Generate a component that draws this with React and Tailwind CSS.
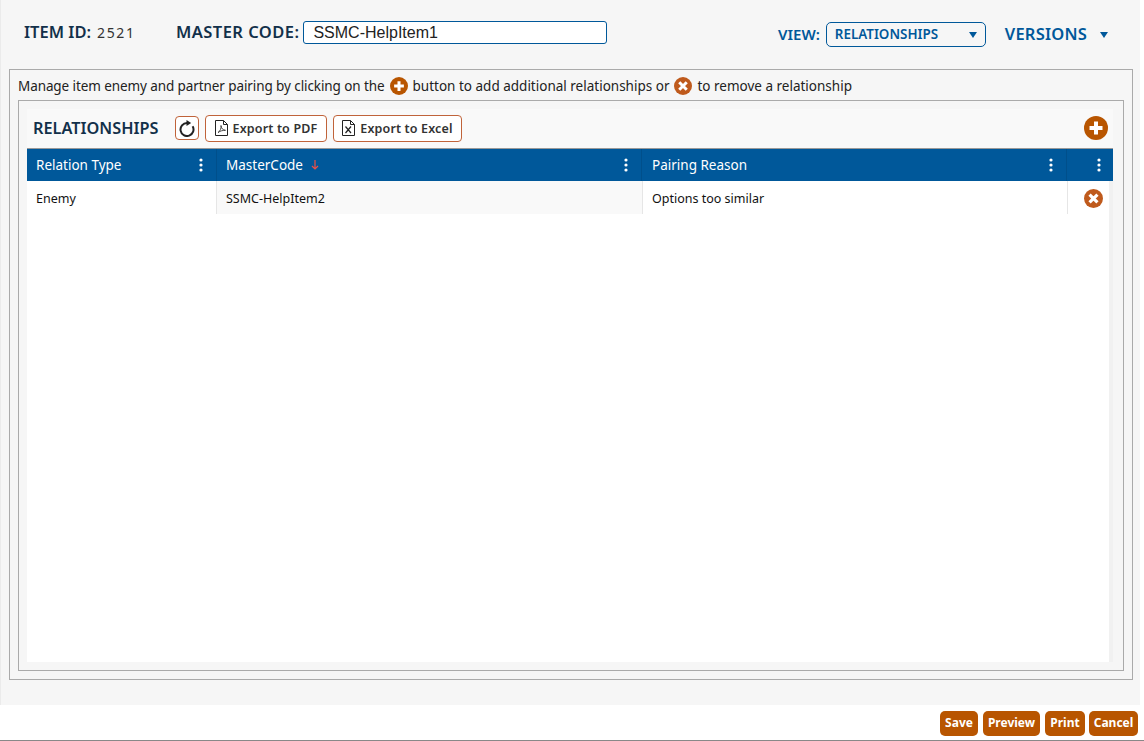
function PlusIcon({ size = 24 }) {
  return (
    <svg width={size} height={size} viewBox="0 0 24 24" className="shrink-0">
      <circle cx="12" cy="12" r="12" fill="#b85500" />
      <path d="M12 5.5v13M5.5 12h13" stroke="#fff" strokeWidth="4" />
    </svg>
  )
}

function CloseIcon({ size = 19 }) {
  return (
    <svg width={size} height={size} viewBox="0 0 24 24" className="shrink-0">
      <circle cx="12" cy="12" r="12" fill="#bf5a1c" />
      <path d="M7 7l10 10M17 7L7 17" stroke="#fff" strokeWidth="4" />
    </svg>
  )
}

function Dots() {
  return (
    <svg width="4" height="14" viewBox="0 0 4 14" className="shrink-0">
      <circle cx="2" cy="2" r="1.6" fill="#fff" />
      <circle cx="2" cy="7" r="1.6" fill="#fff" />
      <circle cx="2" cy="12" r="1.6" fill="#fff" />
    </svg>
  )
}

function Caret({ className }) {
  return (
    <svg width="8" height="6" viewBox="0 0 8 6" className={className}>
      <path d="M0 0h8L4 6z" fill="#00589a" />
    </svg>
  )
}

// page outline with a folded corner, the mark inside differs per export type
function DocIcon({ children }) {
  return (
    <svg width="13" height="16" viewBox="0 0 13 16" fill="none" stroke="#222" strokeWidth="1" className="shrink-0">
      <path d="M0.5 0.5h8l4 4v11h-12z" />
      <path d="M8.5 0.5v4h4" />
      {children}
    </svg>
  )
}

function HeaderCell({ className, children }) {
  return (
    <div className={`flex items-center justify-between border-r border-[#004f8b] ${className}`}>
      <span className="flex items-center gap-2">{children}</span>
      <Dots />
    </div>
  )
}

function ActionButton({ children, className }) {
  return (
    <button className={`h-[27px] flex items-center justify-center rounded border border-[#c0633a] bg-white text-[12.5px] font-semibold text-[#333] tracking-[0.15px] ${className}`}>
      {children}
    </button>
  )
}

function FooterButton({ children, className }) {
  return (
    <button className={`h-[25px] rounded-[5px] bg-[#b85500] text-white text-[12px] font-bold ${className}`}>
      {children}
    </button>
  )
}

export default function App() {
  return (
    <div className="h-[741px] flex flex-col bg-white font-['Noto_Sans',sans-serif] overflow-hidden">
      <div className="h-[705px] w-[1140px] bg-[#f6f6f6] border-l border-[#ebebeb] flex flex-col">
        <div className="h-[69px] flex items-start pl-[23px] pr-[32px] pt-[21px]">
          <div className="h-[23px] flex items-center text-[16.5px] font-semibold text-[#12304a] w-[152px]">
            ITEM ID:
            <span className="ml-[6px] font-normal text-[14px] tracking-[1.6px] text-[#333]">2521</span>
          </div>
          <div className="h-[23px] flex items-center text-[16.5px] font-semibold text-[#12304a] tracking-[0.45px]">MASTER CODE:</div>
          <input
            readOnly
            value="SSMC-HelpItem1"
            className="ml-[4px] w-[304px] h-[23px] border border-[#00589a] rounded-[3px] bg-white pl-[9px] text-[16px] text-[#222] font-['Liberation_Sans',sans-serif] outline-none"
          />
          <div className="ml-auto mt-[1px] h-[25px] flex items-center text-[#00589a] font-semibold">
            <span className="text-[15px] mr-[6px]">VIEW:</span>
            <div className="w-[160px] h-[25px] border border-[#00589a] rounded-[5px] flex items-center justify-between pl-[8px] pr-[8px] text-[13.4px]">
              RELATIONSHIPS
              <Caret />
            </div>
            <span className="ml-[19px] text-[16.5px] tracking-[0.2px]">VERSIONS</span>
            <Caret className="ml-[13px]" />
          </div>
        </div>

        <div className="ml-[8px] mr-[7px] h-[611px] border border-[#aaaaaa] flex flex-col px-[8px] pb-[8px]">
          <div className="h-[30px] pt-[2px] flex items-center text-[13.5px] text-[#222]">
            <span className="tracking-[-0.09px]">Manage item enemy and partner pairing by clicking on the</span>
            <span className="mx-[5px]"><PlusIcon size={18} /></span>
            button to add additional relationships or
            <span className="mx-[5px]"><CloseIcon size={18} /></span>
            to remove a relationship
          </div>
          <div className="flex-1 border border-[#aaaaaa] pl-[8px] pr-[10px] pt-[8px] pb-[8px] flex flex-col">
            <div className="h-[40px] bg-[#f9f9f9] border-b border-[#999] flex items-center pl-[6px] pr-[5px] pb-[1px]">
              <span className="text-[16.3px] font-semibold text-[#12304a] w-[142px]">RELATIONSHIPS</span>
              <button className="w-[24px] h-[24px] flex items-center justify-center rounded border border-[#c0633a] bg-white">
                <svg width="16" height="17" viewBox="0 0 16 17" fill="none" stroke="#222" strokeWidth="2">
                  <path d="M13.6 6.2A6.500 6.500 0 1 1 8 3" />
                  <path d="M7.500 0l4.700 3-4.700 3z" fill="#222" stroke="none" />
                </svg>
              </button>
              <ActionButton className="ml-[6px] w-[122px] gap-[5px]">
                <DocIcon>
                  <path d="M3 12.5c2-1 3.500-4.500 3-7 .2 3 2 4.600 4.500 4.800-2.500-.2-5.500.8-7.500 2.200z" strokeWidth="0.8" />
                </DocIcon>
                <span className="pt-[2px]">Export to PDF</span>
              </ActionButton>
              <ActionButton className="ml-[6px] w-[129px] gap-[5px]">
                <DocIcon>
                  <path d="M3.500 6.500l5.500 6.500M9 6.500l-5.500 6.500" strokeWidth="1.200" />
                </DocIcon>
                <span className="pt-[2px]">Export to Excel</span>
              </ActionButton>
              <span className="ml-auto"><PlusIcon size={24} /></span>
            </div>

            <div className="flex h-[32px] bg-[#00589a] text-white text-[13.5px]">
              <HeaderCell className="w-[190px] pl-[9px] pr-[13px]">Relation Type</HeaderCell>
              <HeaderCell className="w-[425px] pl-[9px] pr-[13px]">
                MasterCode
                <svg width="8" height="10" viewBox="0 0 8 10" fill="none" stroke="#ef4f45" strokeWidth="1.2">
                  <path d="M4 0v9M1 6l3 3 3-3" />
                </svg>
              </HeaderCell>
              <HeaderCell className="w-[425px] pl-[10px] pr-[13px]">Pairing Reason</HeaderCell>
              <div className="flex-1 flex items-center justify-end pr-[12px]">
                <Dots />
              </div>
            </div>

            <div className="flex-1 flex bg-white">
              <div className="flex-1 flex items-start">
                <div className="h-[33px] w-[189px] pt-[3px] flex items-center pl-[9px] text-[12.5px] text-[#111]">Enemy</div>
                <div className="h-[33px] w-[426px] pt-[3px] flex items-center pl-[9px] text-[12.5px] text-[#111] bg-[#f9f9f9] border-l border-[#e6e6e6]">SSMC-HelpItem2</div>
                <div className="h-[33px] w-[425px] pt-[3px] flex items-center pl-[9px] text-[12.5px] text-[#111] border-l border-[#e6e6e6]">Options too similar</div>
                <div className="h-[33px] flex-1 pt-[2px] flex items-center pl-[16px] border-l border-[#e6e6e6]">
                  <CloseIcon size={19} />
                </div>
              </div>
              <div className="w-[4px] bg-[#f1f1f1]" />
            </div>
          </div>
        </div>
      </div>

      <div className="flex-1 flex items-center justify-end pr-[6px] pt-[1px] border-b border-[#888]">
        <FooterButton className="w-[38px]">Save</FooterButton>
        <FooterButton className="ml-[5px] w-[57px]">Preview</FooterButton>
        <FooterButton className="ml-[5px] w-[40px]">Print</FooterButton>
        <FooterButton className="ml-[4px] w-[49px]">Cancel</FooterButton>
      </div>
    </div>
  )
}
